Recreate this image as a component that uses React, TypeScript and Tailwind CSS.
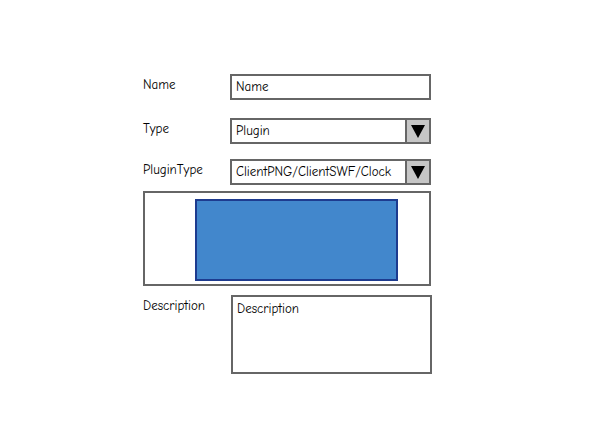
import React from 'react';

const font = { fontFamily: '"Comic Neue", "DejaVu Sans", sans-serif' };

function Label({ children }: { children: React.ReactNode }) {
  return <div className="w-[87px] shrink-0 pt-[3px] text-[13px] leading-4 text-black">{children}</div>;
}

function Select({ value }: { value: string }) {
  return (
    <div className="flex h-[26px] w-[201px] border-2 border-[#666] bg-white">
      <div className="flex flex-1 items-center px-1 text-[13px] text-black">{value}</div>
      <div className="flex w-[24px] items-center justify-center border-l-2 border-[#666] bg-[#c6c6c6]">
        <svg width="16" height="16" viewBox="0 0 16 16">
          <path d="M1 2 L15 2 L8 15 Z" fill="#000" />
        </svg>
      </div>
    </div>
  );
}

export default function App() {
  return (
    <div className="h-[444px] w-[613px] bg-white text-black" style={font}>
      <div className="flex flex-col pl-[143px] pt-[74px]">
        <div className="flex">
          <Label>Name</Label>
          <div className="flex h-[26px] w-[201px] items-center border-2 border-[#666] px-1 text-[13px]">Name</div>
        </div>
        <div className="mt-[18px] flex">
          <Label>Type</Label>
          <Select value="Plugin" />
        </div>
        <div className="mt-[15px] flex">
          <Label>PluginType</Label>
          <Select value="ClientPNG/ClientSWF/Clock" />
        </div>
        <div className="mt-[6px] h-[95px] w-[288px] border-2 border-[#666] pl-[50px] pt-[6px]">
          <div className="h-[82px] w-[203px] border-2 border-[#1d3b8f] bg-[#4287cc]" />
        </div>
        <div className="mt-[9px] flex">
          <Label>Description</Label>
          <div className="ml-px h-[79px] w-[201px] border-2 border-[#666] px-1 pt-[4px] text-[13px] leading-4">Description</div>
        </div>
      </div>
    </div>
  );
}
